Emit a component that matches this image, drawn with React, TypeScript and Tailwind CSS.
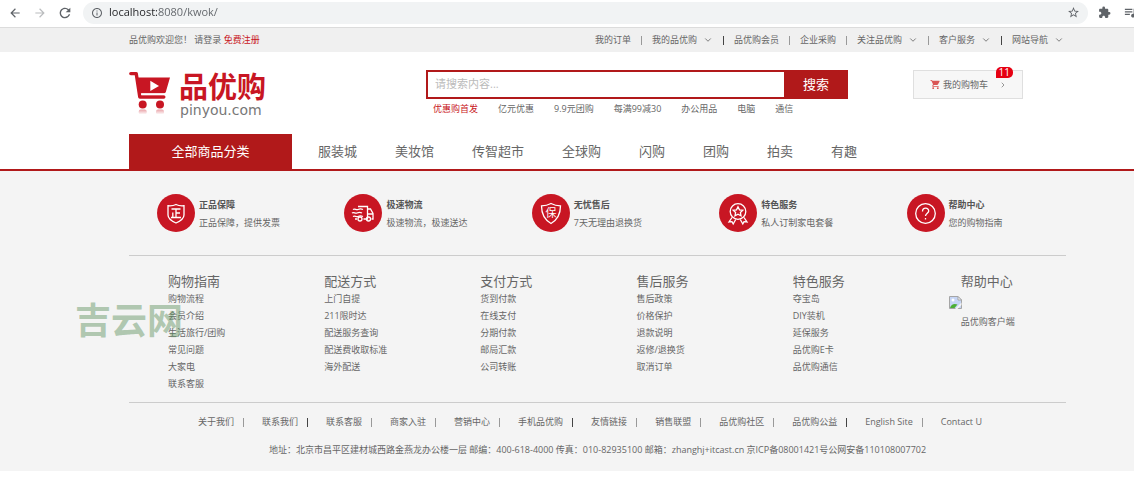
import React from 'react';
import {
  MdArrowBack,
  MdArrowForward,
  MdExtension,
  MdInfoOutline,
  MdQueueMusic,
  MdRefresh,
  MdShoppingCart,
  MdStarBorder,
} from 'react-icons/md';
import { ChevronDown, ChevronRight } from 'lucide-react';

type Shortcut = { label: string; arrow?: boolean; dark?: boolean };

const shortcuts: Shortcut[] = [
  { label: '我的订单' },
  { label: '我的品优购', arrow: true, dark: true },
  { label: '品优购会员' },
  { label: '企业采购' },
  { label: '关注品优购', arrow: true },
  { label: '客户服务', arrow: true, dark: true },
  { label: '网站导航', arrow: true },
];

const hotWords = ['优惠购首发', '亿元优惠', '9.9元团购', '每满99减30', '办公用品', '电脑', '通信'];

const navItems = ['服装城', '美妆馆', '传智超市', '全球购', '闪购', '团购', '拍卖', '有趣'];

const guides = [
  { title: '购物指南', items: ['购物流程', '会员介绍', '生活旅行/团购', '常见问题', '大家电', '联系客服'] },
  { title: '配送方式', items: ['上门自提', '211限时达', '配送服务查询', '配送费收取标准', '海外配送'] },
  { title: '支付方式', items: ['货到付款', '在线支付', '分期付款', '邮局汇款', '公司转账'] },
  { title: '售后服务', items: ['售后政策', '价格保护', '退款说明', '返修/退换货', '取消订单'] },
  { title: '特色服务', items: ['夺宝岛', 'DIY装机', '延保服务', '品优购E卡', '品优购通信'] },
];

const footerLinks = [
  { label: '关于我们' },
  { label: '联系我们', dark: true },
  { label: '联系客服' },
  { label: '商家入驻' },
  { label: '营销中心' },
  { label: '手机品优购', dark: true },
  { label: '友情链接' },
  { label: '销售联盟' },
  { label: '品优购社区' },
  { label: '品优购公益', dark: true },
  { label: 'English Site' },
  { label: 'Contact U' },
];

const ShieldIcon = () => (
  <>
    <path d="M19 10.500c2.500 1.200 5 1.500 8 1.200v9.300c0 3.500-3.500 6-8 8-4.500-2-8-4.500-8-8v-9.300c3 .3 5.500 0 8-1.200z" />
    <path d="M14.500 15h9M19 15v8.500M19 19h4M15.800 18.500v5M14 23.500h10" />
  </>
);

const TruckIcon = () => (
  <>
    <path d="M14 12.500h9.500v12.500h-4M23.500 15h3l2.500 4.500v5.500h-1.500M23.500 20h5M13 25h-2" />
    <path d="M9 15.500c2-1.500 3 1 5 0s3-1 5 0M8 19c2-1.500 3 1 5 0s3-1 5 0M9 22.500c2-1.500 3 1 5 0s3-1 5 0" />
    <circle cx="16" cy="25" r="2" />
    <circle cx="24.500" cy="25" r="2" />
  </>
);

const GuaranteeIcon = () => (
  <>
    <path d="M19 9.500c3 1.600 6 2.300 9.500 2.300 0 9-3 14-9.500 17.700-6.500-3.700-9.500-8.700-9.500-17.700 3.500 0 6.500-.7 9.500-2.300z" />
    <text
      x="19"
      y="22.500"
      textAnchor="middle"
      fill="#fff"
      stroke="none"
      className="font-['Noto_Sans_CJK_SC',sans-serif] text-[11px]"
    >
      保
    </text>
  </>
);

const MedalIcon = () => (
  <>
    <path d="M0 32h5.500v6h-5.500z" fill="#f4f4f4" stroke="none" />
    <circle cx="19" cy="17.500" r="7.800" />
    <path d="M19 12.800l1.500 3 3.300.5-2.400 2.300.6 3.300-3-1.600-3 1.600.6-3.300-2.400-2.300 3.300-.5z" />
    <path d="M13 23.500l-3 4.500 3-.3 1.200 2.300 2.500-4.500M25 23.500l3 4.500-3-.3-1.200 2.300-2.500-4.500" />
  </>
);

const HelpIcon = () => (
  <>
    <circle cx="18.500" cy="19.500" r="9.800" />
    <path d="M15.500 17.500c0-4.500 6.500-4.200 6.200-.4-.2 2-3.200 2.300-3.200 5" />
    <path d="M18.500 24v1.500" />
  </>
);

const services = [
  { title: '正品保障', text: '正品保障，提供发票', icon: ShieldIcon },
  { title: '极速物流', text: '极速物流，极速送达', icon: TruckIcon },
  { title: '无忧售后', text: '7天无理由退换货', icon: GuaranteeIcon },
  { title: '特色服务', text: '私人订制家电套餐', icon: MedalIcon },
  { title: '帮助中心', text: '您的购物指南', icon: HelpIcon },
];

const Container: React.FC<{ className?: string; children: React.ReactNode }> = ({ className = '', children }) => (
  <div className="pl-[61px]">
    <div className={`mx-auto max-w-[937px] ${className}`}>{children}</div>
  </div>
);

const BrowserBar = () => (
  <div className="flex h-7 items-center border-b border-[#dcdcdc] bg-white pb-[2px] pl-2 text-[#5f6368]">
    <button type="button" aria-label="Back" className="mr-[11px]">
      <MdArrowBack className="size-[14px]" />
    </button>
    <button type="button" aria-label="Forward" className="mr-[10px] text-[#babcbe]">
      <MdArrowForward className="size-[14px]" />
    </button>
    <button type="button" aria-label="Reload" className="mr-[10px]">
      <MdRefresh className="size-4" />
    </button>
    <div className="flex h-[22px] flex-1 items-center rounded-full bg-[#f1f3f4] pr-2 pl-2">
      <MdInfoOutline className="mr-[6px] size-3" />
      <input
        aria-label="Address"
        defaultValue="localhost:8080/kwok/"
        className="min-w-0 flex-1 bg-[linear-gradient(to_right,#202124_50px,#5f6368_50px)] bg-clip-text font-['Open_Sans','Noto_Sans',sans-serif] text-[11px] text-transparent outline-none"
      />
      <button type="button" aria-label="Bookmark">
        <MdStarBorder className="size-[13px]" />
      </button>
    </div>
    <button type="button" aria-label="Extensions" className="ml-[10px]">
      <MdExtension className="size-[13px]" />
    </button>
    <button type="button" aria-label="Media" className="-mr-1 ml-3">
      <MdQueueMusic className="size-[15px]" />
    </button>
  </div>
);

const TopBar = () => (
  <div className="bg-[#f0f0f0]">
    <Container className="flex h-6 items-center justify-between pr-[2px]">
      <p>
        品优购欢迎您！ <a href="#login">请登录</a>{' '}
        <a href="#register" className="text-[#c81623]">
          免费注册
        </a>
      </p>
      <ul className="flex items-center gap-[10px]">
        {shortcuts.map((item, i) => (
          <React.Fragment key={item.label}>
            <li>
              <a href="#shortcut" className="flex items-center gap-[6px]">
                {item.label}
                {item.arrow && <ChevronDown className="size-[10px]" />}
              </a>
            </li>
            {i < shortcuts.length - 1 && (
              <li aria-hidden="true" className={`h-[9px] w-px ${item.dark ? 'bg-[#444]' : 'bg-[#999]'}`} />
            )}
          </React.Fragment>
        ))}
      </ul>
    </Container>
  </div>
);

const Logo = () => (
  <a href="#home" aria-label="品优购" className="flex w-[297px] shrink-0 items-start gap-2 pt-[19px]">
    <svg viewBox="0 0 42 45" className="h-[45px] w-[42px]">
      <defs>
        <linearGradient id="wheelFade" x1="0" y1="0" x2="0" y2="1">
          <stop offset="0" stopColor="#c81623" stopOpacity="0.4" />
          <stop offset="1" stopColor="#c81623" stopOpacity="0" />
        </linearGradient>
      </defs>
      <path d="M1.800 2.600h5.400l3.600 23.400h24" fill="none" stroke="#c81623" strokeWidth="3.400" strokeLinecap="round" strokeLinejoin="round" />
      <path d="M8.500 6.500h32.500l-4.200 14.500a2 2 0 0 1-2 1.300h-24z" fill="#c81623" />
      <path d="M12.500 23.300h24" stroke="#fff" strokeWidth="1.600" />
      <path d="M21.300 9.800v10.200l8.700-5z" fill="#fff" />
      <circle cx="13.700" cy="33.500" r="4" fill="#c81623" />
      <circle cx="31" cy="33.500" r="4" fill="#c81623" />
      <rect x="9.700" y="38.500" width="8" height="5" rx="2" fill="url(#wheelFade)" />
      <rect x="27" y="38.500" width="8" height="5" rx="2" fill="url(#wheelFade)" />
    </svg>
    <span>
      <span className="block text-[29px] leading-[32px] font-bold text-[#c81623]">品优购</span>
      <span className="block pl-px font-['DejaVu_Sans',sans-serif] text-[14px] leading-[14px] text-[#777]">pinyou.com</span>
    </span>
  </a>
);

const Header = () => (
  <Container className="flex h-[82px] items-start">
    <Logo />
    <div className="pt-[18px]">
      <form className="flex h-[29px]" onSubmit={(e) => e.preventDefault()}>
        <input
          type="search"
          aria-label="搜索"
          placeholder="请搜索内容..."
          className="w-[358px] border-2 border-r-0 border-[#b1191a] bg-white px-[7px] text-[11px] outline-none placeholder:text-[#bbb]"
        />
        <button type="submit" className="w-16 bg-[#b1191a] text-[13px] text-white">
          搜索
        </button>
      </form>
      <ul className="flex gap-5 pt-[2px] pl-[7px] leading-4">
        {hotWords.map((word, i) => (
          <li key={word}>
            <a href="#hot" className={i === 0 ? 'text-[#c81623]' : ''}>
              {word}
            </a>
          </li>
        ))}
      </ul>
    </div>
    <a
      href="#cart"
      className="relative mt-[18px] ml-[65px] flex h-[29px] w-[110px] items-center border border-[#dfdfdf] bg-[#f7f7f7] pl-4"
    >
      <MdShoppingCart className="mr-[2px] size-[11px] text-[#da5555]" />
      我的购物车
      <ChevronRight className="ml-[11px] size-2" />
      <span className="absolute -top-1 right-[9px] h-[11px] rounded-[5px] rounded-bl-none bg-[#e60012] px-[3px] text-[10px] leading-[11px] text-white">
        11
      </span>
    </a>
  </Container>
);

const Nav = () => (
  <nav className="border-b-2 border-[#b1191a] text-[13px]">
    <Container className="flex h-[35px] items-stretch">
      <a href="#all" className="flex w-[163px] items-center justify-center bg-[#b1191a] text-white">
        全部商品分类
      </a>
      <ul className="flex items-center gap-[38px] pl-[26px]">
        {navItems.map((item) => (
          <li key={item}>
            <a href="#nav">{item}</a>
          </li>
        ))}
      </ul>
    </Container>
  </nav>
);

const BrokenImage = () => (
  <svg viewBox="0 0 13 13" className="size-[13px]" aria-hidden="true">
    <path d="M.5.5h8.500l3.500 3.500v8.500h-12z" fill="#c6d5f5" stroke="#a5a5a5" />
    <path d="M9 .5v3.500h3.500z" fill="#fff" stroke="#a5a5a5" />
    <circle cx="4" cy="4" r="1.500" fill="#fff" />
    <path d="M1 12c1-3.500 4-5 7.500-3.500l-3 3.500z" fill="#4caf35" />
    <path d="M6 13l6.500-6.500v2.500l-4 4z" fill="#f4f4f4" />
  </svg>
);

const Footer = () => (
  <footer className="bg-[#f4f4f4]">
    <Container>
      <ul className="grid h-[85px] grid-cols-5 border-b border-[#ccc] pt-[23px]">
        {services.map(({ title, text, icon: Icon }) => (
          <li key={title} className="flex items-start gap-1 pl-7">
            <svg viewBox="0 0 38 38" className="size-[38px] shrink-0" fill="none" stroke="#fff" strokeWidth="1.300">
              <circle cx="19" cy="19" r="19" fill="#c81623" stroke="none" />
              <Icon />
            </svg>
            <div className="pt-[2px] leading-[18px]">
              <h5 className="font-bold text-[#555]">{title}</h5>
              <p>{text}</p>
            </div>
          </li>
        ))}
      </ul>

      <div className="grid h-[147px] grid-cols-6 border-b border-[#ccc] pt-[17px]">
        {guides.map((guide) => (
          <dl key={guide.title} className="pl-[39px] leading-[17px]">
            <dt className="text-[13px]">{guide.title}</dt>
            {guide.items.map((item) => (
              <dd key={item}>
                <a href="#guide">{item}</a>
              </dd>
            ))}
          </dl>
        ))}
        <dl className="pl-[39px] leading-[17px]">
          <dt className="pl-3 text-[13px]">帮助中心</dt>
          <dd className="pt-[6px]">
            <BrokenImage />
            <p className="pt-1 pl-3">品优购客户端</p>
          </dd>
        </dl>
      </div>

      <ul className="flex items-center justify-center pt-[11px] pr-[15px] leading-4">
        {footerLinks.map((link, i) => (
          <li key={link.label} className="flex items-center">
            <a href="#about">{link.label}</a>
            {i < footerLinks.length - 1 && (
              <span className={`mr-[18px] ml-[9px] h-[9px] w-px ${link.dark ? 'bg-[#444]' : 'bg-[#999]'}`} />
            )}
          </li>
        ))}
      </ul>
      <p className="pt-3 pb-[13px] text-center leading-4">
        地址：北京市昌平区建材城西路金燕龙办公楼一层 邮编：400-618-4000 传真：010-82935100 邮箱：zhanghj+itcast.cn
        京ICP备08001421号公网安备110108007702
      </p>
    </Container>
  </footer>
);

export default function App() {
  return (
    <div className="relative min-h-screen overflow-x-hidden bg-white font-['Open_Sans','Noto_Sans_CJK_SC',sans-serif] text-[9px] text-[#666]">
      <BrowserBar />
      <TopBar />
      <Header />
      <Nav />
      <Footer />
      <div className="pointer-events-none absolute top-[303px] left-[75px] text-[36px] leading-[36px] font-bold text-[#5a8f5a]/45">
        吉云网
      </div>
    </div>
  );
}
